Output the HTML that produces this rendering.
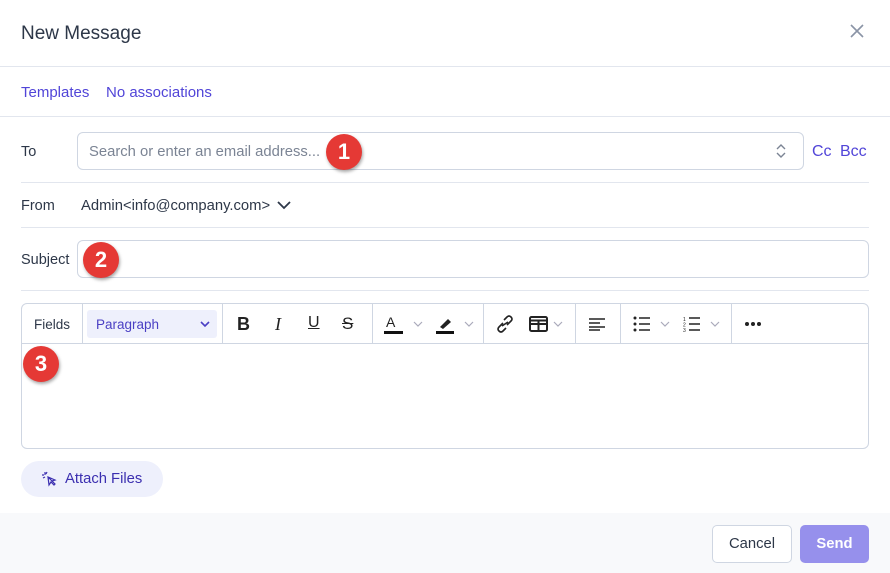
<!DOCTYPE html>
<html><head><style>
*{box-sizing:border-box;margin:0;padding:0}
body{width:890px;height:573px;background:#fff;font-family:"Liberation Sans",sans-serif;position:relative;overflow:hidden;color:#2d3748}
.a{position:absolute;line-height:1.15}
.hr{position:absolute;left:0;right:0;height:1px;background:#e2e6ee}
.hr2{position:absolute;left:21px;right:21px;height:1px;background:#e2e6ee}
.lbl{font-size:14.5px;color:#2d3748}
.inp{border:1px solid #cfd6e2;border-radius:6px;background:#fff}
.badge{position:absolute;width:36px;height:36px;border-radius:50%;background:#e53935;color:#fff;font-weight:bold;font-size:22px;text-align:center;line-height:36px;box-shadow:1px 2px 3px rgba(0,0,0,.35)}
.link{color:#5145d8;font-size:15px}
.sep{position:absolute;top:0;width:1px;height:40px;background:#cfd6e2}
</style></head><body>
<div class="a" style="left:21px;top:23px;font-size:19px;color:#2d3748">New Message</div>
<svg class="a" style="left:849px;top:23px" width="16" height="16" viewBox="0 0 16 16"><path d="M2 2L14 14M14 2L2 14" stroke="#8a94a6" stroke-width="1.6"/></svg>
<div class="hr" style="top:66px"></div>
<div class="a link" style="left:21px;top:84px">Templates</div>
<div class="a link" style="left:106px;top:84px">No associations</div>
<div class="hr" style="top:116px"></div>

<div class="a lbl" style="left:21px;top:144px">To</div>
<div class="a inp" style="left:77px;top:132px;width:727px;height:38px"></div>
<div class="a" style="left:89px;top:144px;font-size:14.8px;color:#7b8494">Search or enter an email address...</div>
<svg class="a" style="left:775px;top:143px" width="12" height="16" viewBox="0 0 12 16"><path d="M2 6L6 2L10 6M2 10L6 14L10 10" stroke="#7b8494" stroke-width="1.4" fill="none"/></svg>
<div class="a link" style="left:812px;top:143px;font-size:16px">Cc</div>
<div class="a link" style="left:840px;top:143px;font-size:16px">Bcc</div>
<div class="badge" style="left:326px;top:134px">1</div>
<div class="hr2" style="top:182px"></div>

<div class="a lbl" style="left:21px;top:198px">From</div>
<div class="a" style="left:81px;top:198px;font-size:14.8px;color:#2d3748">Admin&lt;info@company.com&gt;</div>
<svg class="a" style="left:277px;top:199px" width="14" height="12" viewBox="0 0 14 12"><path d="M1 3L7 9L13 3" stroke="#2d3748" stroke-width="1.8" fill="none"/></svg>
<div class="hr2" style="top:227px"></div>

<div class="a lbl" style="left:21px;top:252px">Subject</div>
<div class="a inp" style="left:77px;top:240px;width:792px;height:38px"></div>
<div class="badge" style="left:83px;top:242px">2</div>
<div class="hr2" style="top:290px"></div>

<div class="a inp" style="left:21px;top:303px;width:848px;height:146px">
 <div class="a" style="left:0;right:0;top:39px;height:1px;background:#cfd6e2"></div>
 <div class="a" style="left:12px;top:13px;font-size:13.5px;color:#2d3748">Fields</div>
 <div class="sep" style="left:60px"></div>
 <div class="a" style="left:65px;top:6px;width:130px;height:28px;background:#eef0fc;border-radius:3px"></div>
 <div class="a" style="left:74px;top:13px;font-size:13.5px;color:#4a3fc4">Paragraph</div>
 <svg class="a" style="left:177px;top:15px" width="12" height="10" viewBox="0 0 12 10"><path d="M2 3L6 7L10 3" stroke="#4a3fc4" stroke-width="1.6" fill="none"/></svg>
 <div class="sep" style="left:200px"></div>
 <div class="a" style="left:215px;top:10px;font-size:18px;font-weight:bold;color:#222">B</div>
 <div class="a" style="left:253px;top:10px;font-size:18px;font-style:italic;font-family:'Liberation Serif',serif;color:#222">I</div>
 <div class="a" style="left:286px;top:10px;font-size:16px;text-decoration:underline;color:#222">U</div>
 <div class="a" style="left:320px;top:10px;font-size:17px;text-decoration:line-through;color:#222">S</div>
 <div class="sep" style="left:350px"></div>
 <div class="a" style="left:364px;top:10px;font-size:14px;color:#222">A</div>
 <div class="a" style="left:362px;top:27px;width:19px;height:3px;background:#111"></div>
 <svg class="a" style="left:390px;top:15px" width="12" height="10"><path d="M2 3L6 7L10 3" stroke="#aab" stroke-width="1.2" fill="none"/></svg>
 <svg class="a" style="left:413px;top:10px" width="20" height="20" viewBox="0 0 20 20"><path d="M5 13L13 5L16 8L8 15Z" fill="#222"/><rect x="1" y="17" width="18" height="3" fill="#111"/></svg>
 <svg class="a" style="left:441px;top:15px" width="12" height="10"><path d="M2 3L6 7L10 3" stroke="#aab" stroke-width="1.2" fill="none"/></svg>
 <div class="sep" style="left:461px"></div>
 <svg class="a" style="left:473px;top:11px" width="20" height="18" viewBox="0 0 20 18"><path d="M9 5L12 2Q14 0 16 2Q18 4 16 6L12 10M11 13L8 16Q6 18 4 16Q2 14 4 12L8 8M7 11L13 7" stroke="#222" stroke-width="1.6" fill="none"/></svg>
 <svg class="a" style="left:507px;top:12px" width="20" height="17" viewBox="0 0 20 17"><rect x="1" y="1" width="17" height="14" rx="1.5" fill="none" stroke="#222" stroke-width="2"/><path d="M1 8H18M9.5 5V15M1 4.5H18" stroke="#222" stroke-width="2"/></svg>
 <svg class="a" style="left:530px;top:15px" width="12" height="10"><path d="M2 3L6 7L10 3" stroke="#aab" stroke-width="1.2" fill="none"/></svg>
 <div class="sep" style="left:553px"></div>
 <svg class="a" style="left:566px;top:13px" width="18" height="14"><path d="M1 2H17M1 6H12M1 10H17M1 13H12" stroke="#222" stroke-width="1.6"/></svg>
 <div class="sep" style="left:598px"></div>
 <svg class="a" style="left:611px;top:12px" width="18" height="16"><circle cx="2" cy="2" r="1.5" fill="#222"/><circle cx="2" cy="8" r="1.5" fill="#222"/><circle cx="2" cy="14" r="1.5" fill="#222"/><path d="M6 2H17M6 8H17M6 14H17" stroke="#222" stroke-width="1.6"/></svg>
 <svg class="a" style="left:637px;top:15px" width="12" height="10"><path d="M2 3L6 7L10 3" stroke="#aab" stroke-width="1.2" fill="none"/></svg>
 <svg class="a" style="left:661px;top:12px" width="18" height="16"><text x="0" y="5" font-size="5" fill="#222">1</text><text x="0" y="10.5" font-size="5" fill="#222">2</text><text x="0" y="16" font-size="5" fill="#222">3</text><path d="M6 2H17M6 8H17M6 14H17" stroke="#222" stroke-width="1.6"/></svg>
 <svg class="a" style="left:687px;top:15px" width="12" height="10"><path d="M2 3L6 7L10 3" stroke="#aab" stroke-width="1.2" fill="none"/></svg>
 <div class="sep" style="left:709px"></div>
 <svg class="a" style="left:722px;top:17px" width="18" height="6"><circle cx="3" cy="3" r="2" fill="#222"/><circle cx="9" cy="3" r="2" fill="#222"/><circle cx="15" cy="3" r="2" fill="#222"/></svg>
</div>
<div class="badge" style="left:23px;top:346px">3</div>

<div class="a" style="left:21px;top:461px;width:142px;height:36px;border-radius:18px;background:#eef0fc"></div>
<svg class="a" style="left:41px;top:471px" width="16" height="16" viewBox="0 0 16 16"><path d="M7 6L13 12M7 6L8 14L10 11L13 14L14 13L11 10L14 9Z" stroke="#3b2fb0" stroke-width="1.2" fill="none"/><path d="M4 1V4M1 4H3M2 7L4 6M6 1L5 3" stroke="#3b2fb0" stroke-width="1.2"/></svg>
<div class="a" style="left:65px;top:471px;font-size:14.8px;color:#3b2fb0">Attach Files</div>

<div class="a" style="left:0;top:513px;width:890px;height:60px;background:#f8f9fb"></div>
<div class="a" style="left:712px;top:525px;width:80px;height:38px;border:1px solid #cfd6e2;border-radius:5px;background:#fff;font-size:14.8px;text-align:center;line-height:37px;color:#2d3748">Cancel</div>
<div class="a" style="left:800px;top:525px;width:69px;height:38px;border-radius:5px;background:#9690ec;font-size:14.8px;font-weight:bold;text-align:center;line-height:38px;color:#fff">Send</div>
</body></html>
